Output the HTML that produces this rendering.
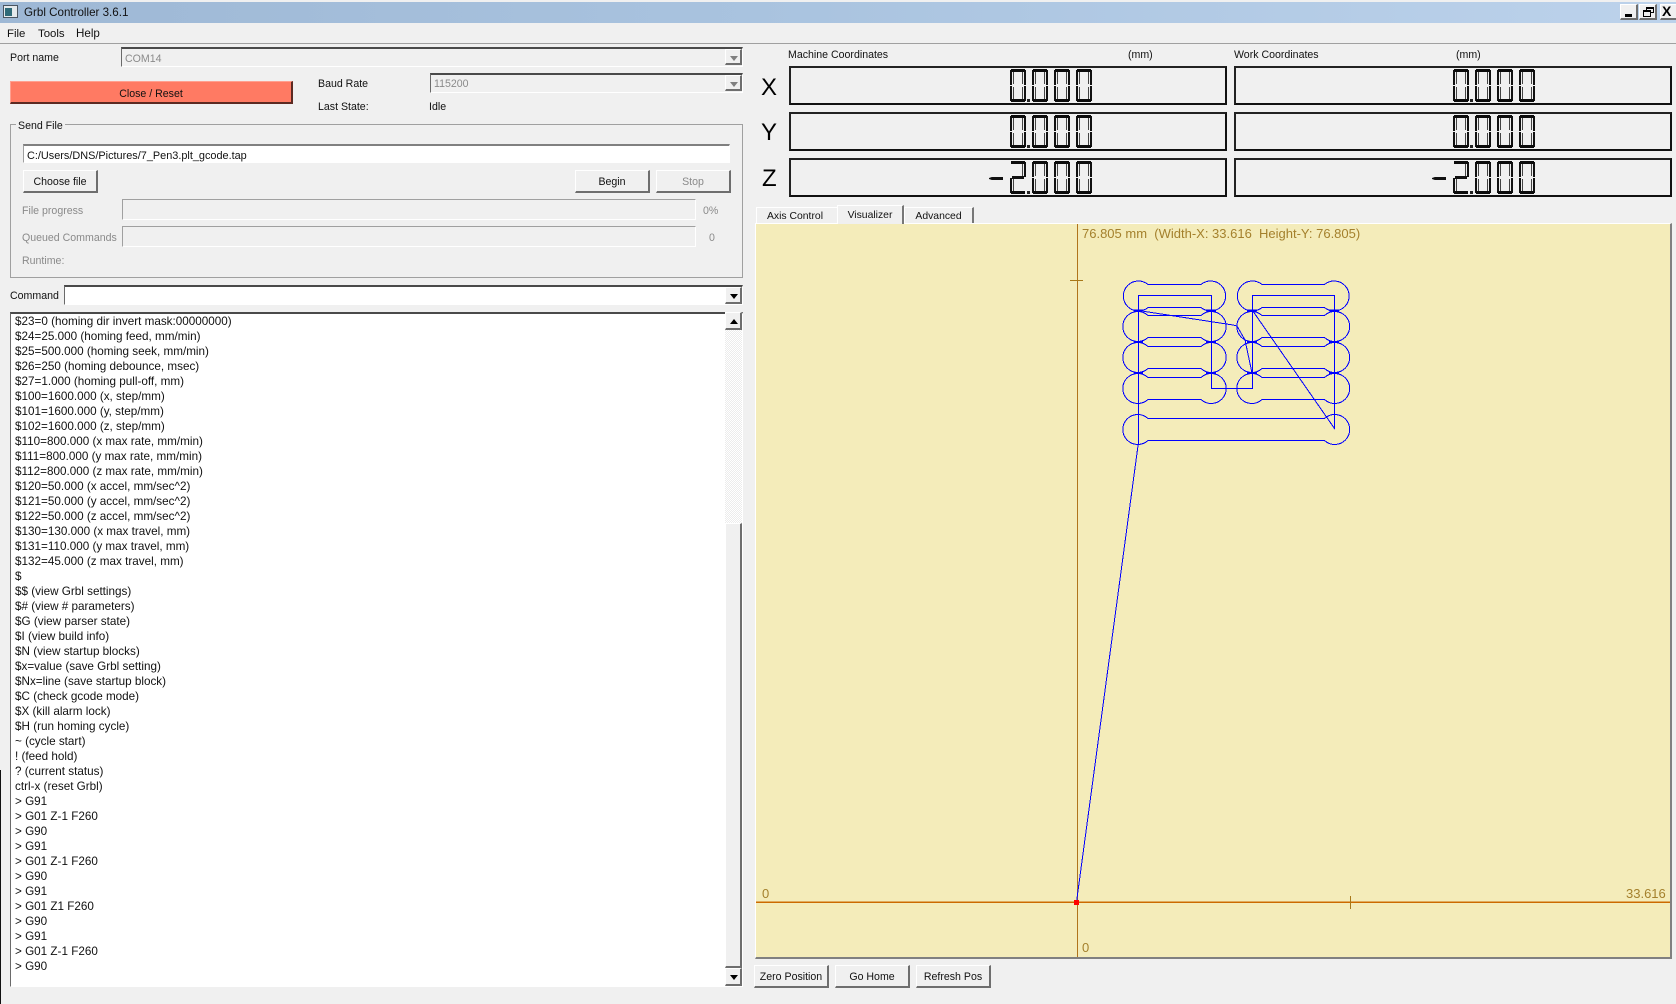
<!DOCTYPE html>
<html><head><meta charset="utf-8"><title>Grbl Controller 3.6.1</title>
<style>
html,body{margin:0;padding:0;background:#f0f0f0;}
body{position:relative;width:1676px;height:1004px;overflow:hidden;font-family:"Liberation Sans",sans-serif;font-size:10.6px;color:#111;}
div,span,i,pre{box-sizing:border-box;}
.a{position:absolute;}
.t{position:absolute;white-space:nowrap;line-height:14px;height:14px;margin-top:1px;}
.g{color:#8a8a8a;}
.btn{position:absolute;background:#f0f0f0;border-top:1px solid #fff;border-left:1px solid #fff;border-right:2px solid #6e6e6e;border-bottom:2px solid #6e6e6e;text-align:center;white-space:nowrap;}
.sunk{position:absolute;border-top:2px solid #4a4a4a;border-left:1px solid #6a6a6a;border-bottom:1px solid #fff;border-right:1px solid #fff;}
.bar{position:absolute;background:#f0f0f0;border-top:1px solid #a0a0a0;border-left:1px solid #a0a0a0;border-bottom:1px solid #fff;border-right:1px solid #fff;}
.ar{position:absolute;background:#f0f0f0;border-top:1px solid #fff;border-left:1px solid #fff;border-right:2px solid #6e6e6e;border-bottom:2px solid #6e6e6e;}
.dn::after{content:"";position:absolute;left:4px;top:6px;border-left:4px solid transparent;border-right:4px solid transparent;border-top:5px solid #000;}
.up::after{content:"";position:absolute;left:4px;top:6px;border-left:4px solid transparent;border-right:4px solid transparent;border-bottom:5px solid #000;}
.dis::after{border-top-color:#808080;}
.lcd{position:absolute;width:438px;height:39px;background:#f0f0f0;border-top:2px solid #222;border-left:2px solid #222;border-right:2px solid #111;border-bottom:2px solid #111;}
.d{position:absolute;width:16px;height:33px;color:transparent;font-size:1px;font-style:normal;overflow:hidden;}
.z{background:
linear-gradient(#0c0c0c 0 0) 1px 0/14px 3px no-repeat,
linear-gradient(#0c0c0c 0 0) 1px 30px/14px 3px no-repeat,
linear-gradient(#111 0 0) 0 1px/2px 15px no-repeat,
linear-gradient(#111 0 0) 0 17px/2px 15px no-repeat,
linear-gradient(#444 0 0) 3px 3px/1px 12px no-repeat,
linear-gradient(#444 0 0) 3px 18px/1px 12px no-repeat,
linear-gradient(#111 0 0) 14px 1px/2px 15px no-repeat,
linear-gradient(#111 0 0) 14px 17px/2px 15px no-repeat,
linear-gradient(#444 0 0) 12px 3px/1px 12px no-repeat,
linear-gradient(#444 0 0) 12px 18px/1px 12px no-repeat;}
.w{background:
linear-gradient(#0c0c0c 0 0) 1px 0/14px 3px no-repeat,
linear-gradient(#0c0c0c 0 0) 1px 30px/14px 3px no-repeat,
linear-gradient(#111 0 0) 2px 15px/12px 3px no-repeat,
linear-gradient(#111 0 0) 14px 1px/2px 15px no-repeat,
linear-gradient(#444 0 0) 12px 3px/1px 12px no-repeat,
linear-gradient(#111 0 0) 0 17px/2px 15px no-repeat,
linear-gradient(#444 0 0) 3px 18px/1px 12px no-repeat;}
.c{position:absolute;width:3px;height:3px;background:#222;color:transparent;font-size:1px;overflow:hidden;}
.m{position:absolute;width:14px;height:3px;background:#111;color:transparent;font-size:1px;overflow:hidden;clip-path:polygon(0 35%,20% 0,100% 0,100% 100%,20% 100%,0 65%);}
.ax{position:absolute;font-size:24px;line-height:30px;color:#000;}
.tab{position:absolute;background:#f0f0f0;border-top:1px solid #fff;border-left:1px solid #fff;text-align:center;font-size:10.4px;}
pre{position:absolute;margin:0;font-family:"Liberation Sans",sans-serif;font-size:11.7px;line-height:15px;color:#111;}
.cv{position:absolute;color:#a4802c;font-size:13px;line-height:16px;height:16px;white-space:pre;}
</style></head>
<body>
<!-- title bar -->
<div class="a" style="left:0;top:2px;width:1676px;height:21px;background:linear-gradient(90deg,#9eb8d5,#a9c3df 45%,#bcd2eb);"></div>
<div class="a" style="left:3px;top:5px;width:15px;height:13px;background:#e4e9ec;border:1px solid #4a5460;"><div class="a" style="left:1px;top:2px;width:7px;height:8px;background:#2f6a78;"></div></div>
<div class="t" style="left:24px;top:5px;font-size:11.6px;">Grbl Controller 3.6.1</div>
<div class="btn" style="left:1620px;top:4px;width:18px;height:16px;"><div class="a" style="left:4px;top:9px;width:7px;height:3px;background:#000;"></div></div>
<div class="btn" style="left:1639px;top:4px;width:18px;height:16px;"><div class="a" style="left:6px;top:2px;width:8px;height:6px;border:1px solid #000;border-top-width:2px;"></div><div class="a" style="left:3px;top:5px;width:8px;height:7px;border:1px solid #000;border-top-width:2px;background:#f0f0f0;"></div></div>
<div class="btn" style="left:1660px;top:4px;width:18px;height:16px;font-weight:bold;font-size:14px;line-height:13px;color:#000;text-align:left;padding-left:1px;">X</div>
<!-- menu -->
<div class="t" style="left:7px;top:26px;font-size:11.4px;">File</div>
<div class="t" style="left:38px;top:26px;font-size:11.4px;">Tools</div>
<div class="t" style="left:76px;top:26px;font-size:11.6px;">Help</div>
<div class="a" style="left:0;top:43px;width:1676px;height:1px;background:#a0a0a0;"></div>
<!-- port -->
<div class="t" style="left:10px;top:50px;">Port name</div>
<div class="sunk" style="left:121px;top:47px;width:622px;height:20px;"></div>
<div class="t g" style="left:125px;top:51px;">COM14</div>
<div class="ar dn dis" style="left:725px;top:49px;width:17px;height:16px;"></div>
<div class="btn" style="left:10px;top:81px;width:283px;height:23px;background:#ff7a63;border-top-color:#ffa090;border-left-color:#ffa090;border-right-color:#5c2a22;border-bottom-color:#5c2a22;line-height:24px;">Close / Reset</div>
<div class="t" style="left:318px;top:76px;">Baud Rate</div>
<div class="sunk" style="left:430px;top:73px;width:313px;height:20px;"></div>
<div class="t g" style="left:434px;top:76px;">115200</div>
<div class="ar dn dis" style="left:725px;top:75px;width:17px;height:16px;"></div>
<div class="t" style="left:318px;top:99px;">Last State:</div>
<div class="t" style="left:429px;top:99px;">Idle</div>
<!-- group -->
<div class="a" style="left:10px;top:124px;width:733px;height:154px;border:1px solid #a0a0a0;"></div>
<div class="t" style="left:16px;top:118px;background:#f0f0f0;padding:0 2px;">Send File</div>
<div class="sunk" style="left:23px;top:144px;width:707px;height:19px;background:#fff;border-top-color:#808080;border-left-color:#a0a0a0;"></div>
<div class="t" style="left:27px;top:148px;font-size:10.9px;">C:/Users/DNS/Pictures/7_Pen3.plt_gcode.tap</div>
<div class="btn" style="left:23px;top:170px;width:75px;height:23px;line-height:23px;">Choose file</div>
<div class="btn" style="left:575px;top:170px;width:75px;height:23px;line-height:23px;">Begin</div>
<div class="btn g" style="left:656px;top:170px;width:75px;height:23px;line-height:23px;">Stop</div>
<div class="t g" style="left:22px;top:203px;">File progress</div>
<div class="bar" style="left:122px;top:199px;width:574px;height:21px;"></div>
<div class="t g" style="left:703px;top:203px;">0%</div>
<div class="t g" style="left:22px;top:230px;">Queued Commands</div>
<div class="bar" style="left:122px;top:226px;width:574px;height:21px;"></div>
<div class="t g" style="left:709px;top:230px;">0</div>
<div class="t g" style="left:22px;top:253px;">Runtime:</div>
<!-- command -->
<div class="t" style="left:10px;top:288px;">Command</div>
<div class="sunk" style="left:64px;top:285px;width:679px;height:20px;background:#fff;"></div>
<div class="ar dn" style="left:725px;top:287px;width:17px;height:17px;"></div>
<!-- log -->
<div class="sunk" style="left:10px;top:312px;width:733px;height:675px;background:#fff;"></div>
<pre style="left:15px;top:314px;">$23=0 (homing dir invert mask:00000000)
$24=25.000 (homing feed, mm/min)
$25=500.000 (homing seek, mm/min)
$26=250 (homing debounce, msec)
$27=1.000 (homing pull-off, mm)
$100=1600.000 (x, step/mm)
$101=1600.000 (y, step/mm)
$102=1600.000 (z, step/mm)
$110=800.000 (x max rate, mm/min)
$111=800.000 (y max rate, mm/min)
$112=800.000 (z max rate, mm/min)
$120=50.000 (x accel, mm/sec^2)
$121=50.000 (y accel, mm/sec^2)
$122=50.000 (z accel, mm/sec^2)
$130=130.000 (x max travel, mm)
$131=110.000 (y max travel, mm)
$132=45.000 (z max travel, mm)
$
$$ (view Grbl settings)
$# (view # parameters)
$G (view parser state)
$I (view build info)
$N (view startup blocks)
$x=value (save Grbl setting)
$Nx=line (save startup block)
$C (check gcode mode)
$X (kill alarm lock)
$H (run homing cycle)
~ (cycle start)
! (feed hold)
? (current status)
ctrl-x (reset Grbl)
&gt; G91
&gt; G01 Z-1 F260
&gt; G90
&gt; G91
&gt; G01 Z-1 F260
&gt; G90
&gt; G91
&gt; G01 Z1 F260
&gt; G90
&gt; G91
&gt; G01 Z-1 F260
&gt; G90</pre>
<!-- scrollbar -->
<div class="a" style="left:725px;top:330px;width:17px;height:194px;background:conic-gradient(#fff 25%,#ececec 0 50%,#fff 0 75%,#ececec 0) 0 0/2px 2px;"></div>
<div class="ar up" style="left:725px;top:312px;width:17px;height:18px;"></div>
<div class="btn" style="left:725px;top:523px;width:17px;height:445px;"></div>
<div class="ar dn" style="left:725px;top:968px;width:17px;height:18px;"></div>
<div class="a" style="left:0;top:770px;width:1px;height:234px;background:#111;"></div>
<!-- coords -->
<div class="t" style="left:788px;top:47px;">Machine Coordinates</div>
<div class="t" style="left:1128px;top:47px;">(mm)</div>
<div class="t" style="left:1234px;top:47px;">Work Coordinates</div>
<div class="t" style="left:1456px;top:47px;">(mm)</div>
<div class="ax" style="left:761px;top:73px;">X</div>
<div class="ax" style="left:761px;top:118px;">Y</div>
<div class="ax" style="left:762px;top:164px;">Z</div>
<div class="lcd" style="left:789px;top:66px;"></div>
<div class="lcd" style="left:1234px;top:66px;"></div>
<div class="lcd" style="left:789px;top:112px;"></div>
<div class="lcd" style="left:1234px;top:112px;"></div>
<div class="lcd" style="left:789px;top:158px;"></div>
<div class="lcd" style="left:1234px;top:158px;"></div>
<i class="d z" style="left:1010px;top:69px;">0</i><i class="c" style="left:1027px;top:99px;">,</i><i class="d z" style="left:1032px;top:69px;">0</i><i class="d z" style="left:1054px;top:69px;">0</i><i class="d z" style="left:1076px;top:69px;">0</i>
<i class="d z" style="left:1453px;top:69px;">0</i><i class="c" style="left:1470px;top:99px;">,</i><i class="d z" style="left:1475px;top:69px;">0</i><i class="d z" style="left:1497px;top:69px;">0</i><i class="d z" style="left:1519px;top:69px;">0</i>
<i class="d z" style="left:1010px;top:115px;">0</i><i class="c" style="left:1027px;top:145px;">,</i><i class="d z" style="left:1032px;top:115px;">0</i><i class="d z" style="left:1054px;top:115px;">0</i><i class="d z" style="left:1076px;top:115px;">0</i>
<i class="d z" style="left:1453px;top:115px;">0</i><i class="c" style="left:1470px;top:145px;">,</i><i class="d z" style="left:1475px;top:115px;">0</i><i class="d z" style="left:1497px;top:115px;">0</i><i class="d z" style="left:1519px;top:115px;">0</i>
<i class="m" style="left:989px;top:177px;">-</i><i class="d w" style="left:1010px;top:161px;">2</i><i class="c" style="left:1027px;top:191px;">,</i><i class="d z" style="left:1032px;top:161px;">0</i><i class="d z" style="left:1054px;top:161px;">0</i><i class="d z" style="left:1076px;top:161px;">0</i>
<i class="m" style="left:1432px;top:177px;">-</i><i class="d w" style="left:1453px;top:161px;">2</i><i class="c" style="left:1470px;top:191px;">,</i><i class="d z" style="left:1475px;top:161px;">0</i><i class="d z" style="left:1497px;top:161px;">0</i><i class="d z" style="left:1519px;top:161px;">0</i>
<!-- tabs -->
<div class="tab" style="left:756px;top:207px;width:81px;height:17px;line-height:18px;padding-right:4px;">Axis Control</div>
<div class="tab" style="left:904px;top:207px;width:70px;height:17px;line-height:18px;border-right:2px solid #777;">Advanced</div>
<!-- canvas -->
<div class="a" style="left:755px;top:223px;width:917px;height:736px;background:#f4ecba;border-top:1px solid #fff;border-left:1px solid #fff;border-right:2px solid #808080;border-bottom:2px solid #808080;"></div>
<div class="tab" style="left:837px;top:205px;width:67px;height:19px;line-height:19px;border-right:2px solid #777;">Visualizer</div>
<svg class="a" style="left:0;top:0;" width="1676" height="1004" viewBox="0 0 1676 1004">
<g shape-rendering="crispEdges" fill="none">
<path d="M1077.5 224V957" stroke="#b0741c"/>
<path d="M756 902H1670" stroke="#cc6a00" stroke-width="1.5"/>
<path d="M1070 280.5H1083M1350.5 896V909" stroke="#a87818"/>
<g stroke="#0000ff">
<path d="M1148 284.5H1201A15 15 0 1 1 1201 307.5H1148A15 15 0 1 1 1148 284.5Z"/>
<path d="M1148 315.5H1201A15 15 0 1 1 1201 337.5H1148A15 15 0 1 1 1148 315.5Z"/>
<path d="M1148 346.5H1201A15 15 0 1 1 1201 368.5H1148A15 15 0 1 1 1148 346.5Z"/>
<path d="M1148 377.5H1201A15 15 0 1 1 1201 399.5H1148A15 15 0 1 1 1148 377.5Z"/>
<path d="M1262 284.5H1324.5A15 15 0 1 1 1324.5 307.5H1262A15 15 0 1 1 1262 284.5Z"/>
<path d="M1262 315.5H1324.5A15 15 0 1 1 1324.5 337.5H1262A15 15 0 1 1 1262 315.5Z"/>
<path d="M1262 346.5H1324.5A15 15 0 1 1 1324.5 368.5H1262A15 15 0 1 1 1262 346.5Z"/>
<path d="M1262 377.5H1324.5A15 15 0 1 1 1324.5 399.5H1262A15 15 0 1 1 1262 377.5Z"/>
<path d="M1148 418.5H1324.5A15 15 0 1 1 1324.5 440.5H1148A15 15 0 1 1 1148 418.5Z"/>
<path d="M1076.5 902L1138.5 442V295.5H1211.5V388.5H1252.5V295.5H1334.5V428.5L1252.5 310.5"/>
<path d="M1138.5 310.5L1233 325L1237 326L1245 340L1252 373"/>
</g>
<path d="M1134 310.5H1143M1134 342H1143M1134 373H1143M1206 310.5H1216M1206 342H1216M1206 373H1216M1247 310.5H1257M1247 342H1257M1247 373H1257M1329 310.5H1339M1329 342H1339M1329 373H1339" stroke="#0000ff" stroke-width="2"/>
<rect x="1074" y="900" width="5" height="5" fill="#ff0000"/>
</g>
</svg>
<div class="cv" style="left:1082px;top:226px;">76.805 mm  (Width-X: 33.616  Height-Y: 76.805)</div>
<div class="cv" style="left:762px;top:886px;">0</div>
<div class="cv" style="left:1626px;top:886px;">33.616</div>
<div class="cv" style="left:1082px;top:940px;">0</div>
<!-- bottom buttons -->
<div class="btn" style="left:754px;top:965px;width:75px;height:23px;line-height:23px;">Zero Position</div>
<div class="btn" style="left:835px;top:965px;width:75px;height:23px;line-height:23px;">Go Home</div>
<div class="btn" style="left:916px;top:965px;width:75px;height:23px;line-height:23px;">Refresh Pos</div>
</body></html>
